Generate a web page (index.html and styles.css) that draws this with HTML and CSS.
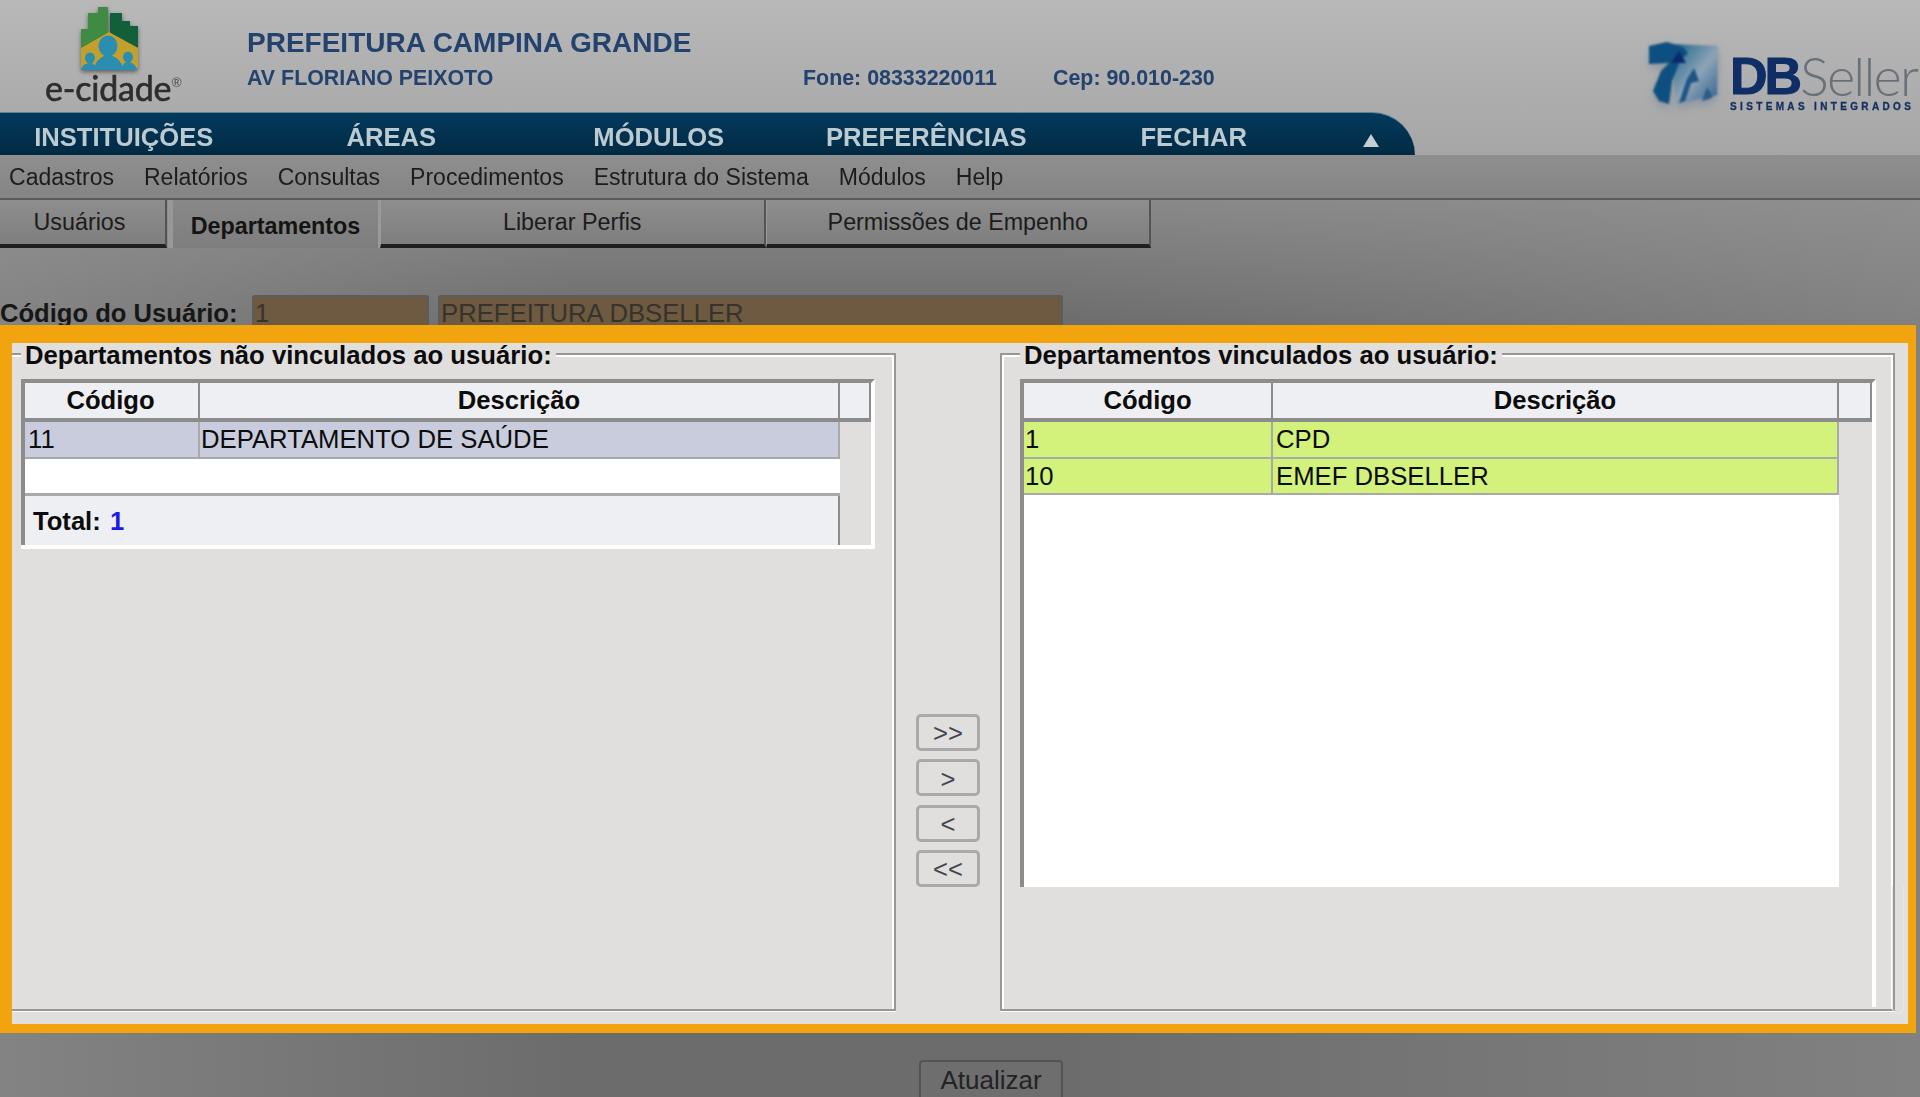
FILE: index.html
```html
<!DOCTYPE html>
<html lang="pt-BR">
<head>
<meta charset="utf-8">
<title>e-cidade</title>
<link rel="stylesheet" href="styles.css">
</head>
<body>
<div class="top">
  <header class="header">
    <div class="brand">
      <svg class="brand-icon" viewBox="0 0 60 66" width="60" height="66" aria-hidden="true">
        <path fill="#3f8b43" d="M1 23H8V7H18V1H28V27L1 42Z"/>
        <path fill="#11603a" d="M30 27V7H42V15H50V20H58V42Z"/>
        <path fill="#c2a02e" d="M1 42L29 26L58 42V62H1Z"/>
        <ellipse fill="#2b8eb0" cx="28" cy="40" rx="9.5" ry="10.5"/>
        <ellipse fill="#2b8eb0" cx="10" cy="52" rx="5" ry="5.5"/>
        <ellipse fill="#2b8eb0" cx="48" cy="51" rx="5" ry="5.5"/>
        <path fill="#2b8eb0" d="M14 64C15 54 22 50 28 49C35 50 42 54 43 64Z"/>
        <path fill="#2b8eb0" d="M1 64C2 59 6 57 10 57C13 57 16 59 17 64Z"/>
        <path fill="#2b8eb0" d="M41 64C42 59 44 56 48 56C52 56 56 59 57 64Z"/>
      </svg>
      <div class="brand-name">e-cidade<sup class="brand-reg">®</sup></div>
    </div>
    <div class="org">
      <div class="org-title">PREFEITURA CAMPINA GRANDE</div>
      <div class="org-line">AV FLORIANO PEIXOTO</div>
      <div class="org-line">Fone: 08333220011</div>
      <div class="org-line">Cep: 90.010-230</div>
    </div>
    <div class="dbseller">
      <svg class="db-icon" viewBox="0 0 72 72" width="72" height="72" aria-hidden="true">
        <defs>
          <linearGradient id="dbg" x1="0" y1="0" x2="1" y2="1">
            <stop offset="0" stop-color="#0e6088"/>
            <stop offset=".55" stop-color="#8ea3b6"/>
            <stop offset="1" stop-color="#2b5f8e"/>
          </linearGradient>
        </defs>
        <path fill="url(#dbg)" d="M22 3L71 5L70 54L30 63Z"/>
        <path fill="#0d4f80" d="M2 5L20 1L36 6L41 12L33 20L25 40L22 63L12 60L6 50L14 30L22 22L2 23Z"/>
        <path fill="#0b2868" d="M32 10L24 22L39 22Z"/>
        <path fill="#1c5484" d="M47 27L40 38L32 62L38 60L44 42L52 40Z"/>
        <path fill="#2a5b88" d="M60 46L55 60L62 58L66 56Z"/>
      </svg>
      <div class="db-text">
        <div class="db-word"><b class="db-bold">DB</b><span class="db-thin">Seller</span></div>
        <div class="db-sub">SISTEMAS INTEGRADOS</div>
      </div>
    </div>
  </header>
  <nav class="nav">
    <a class="nav-item nav-first">INSTITUIÇÕES</a>
    <a class="nav-item">ÁREAS</a>
    <a class="nav-item">MÓDULOS</a>
    <a class="nav-item">PREFERÊNCIAS</a>
    <a class="nav-item">FECHAR</a>
    <span class="nav-arrow"></span>
  </nav>
</div>
<div class="menu">
  <a>Cadastros</a><a>Relatórios</a><a>Consultas</a><a>Procedimentos</a><a>Estrutura do Sistema</a><a>Módulos</a><a>Help</a>
</div>
<main class="main">
  <div class="tabs">
    <div class="tab tab-users">Usuários</div>
    <div class="tab tab-active">Departamentos</div>
    <div class="tab tab-wide">Liberar Perfis</div>
    <div class="tab tab-wide">Permissões de Empenho</div>
  </div>
  <div class="user-row">
    <span class="user-label">Código do Usuário:</span>
    <div class="field field-code">1</div>
    <div class="field field-name">PREFEITURA DBSELLER</div>
  </div>
  <section class="panel">
    <fieldset class="group group-left">
      <legend class="group-title">Departamentos não vinculados ao usuário:</legend>
      <div class="list list-left">
        <div class="list-head cols-left">
          <div class="hcell hcell-code">Código</div>
          <div class="hcell">Descrição</div>
          <div class="hcell"></div>
        </div>
        <div class="list-rows rows-left">
          <div class="row cols-data-left row-sel">
            <div class="cell">11</div>
            <div class="cell cell-tight">DEPARTAMENTO DE SAÚDE</div>
          </div>
          <div class="row-empty"></div>
          <div class="total">Total: <span class="total-num">1</span></div>
        </div>
      </div>
    </fieldset>
    <div class="movers">
      <button class="mover">&gt;&gt;</button>
      <button class="mover">&gt;</button>
      <button class="mover">&lt;</button>
      <button class="mover">&lt;&lt;</button>
    </div>
    <fieldset class="group group-right">
      <legend class="group-title">Departamentos vinculados ao usuário:</legend>
      <div class="list list-right">
        <div class="list-head cols-right">
          <div class="hcell">Código</div>
          <div class="hcell">Descrição</div>
          <div class="hcell"></div>
        </div>
        <div class="list-rows rows-right">
          <div class="row cols-data-right row-on">
            <div class="cell cell-tight">1</div>
            <div class="cell">CPD</div>
          </div>
          <div class="row cols-data-right row-on">
            <div class="cell cell-tight">10</div>
            <div class="cell">EMEF DBSELLER</div>
          </div>
        </div>
      </div>
    </fieldset>
    <div class="scroll-track"></div>
  </section>
  <div class="footer">
    <button class="update">Atualizar</button>
  </div>
</main>
</body>
</html>
```

FILE: styles.css
```css
* { box-sizing: border-box; }
html, body { margin: 0; height: 1097px; overflow: hidden; }
body {
  font-family: "Liberation Sans", Arial, sans-serif;
  color: #1c1c1c;
  background: #808080;
  display: flex;
  flex-direction: column;
}

/* top band */
.top { background: linear-gradient(#b8b8b8, #a6a6a6); height: 155px; flex: none; }
.header { height: 112px; display: flex; align-items: flex-start; }
.brand { width: 247px; flex: none; display: flex; flex-direction: column; align-items: flex-start; padding: 6px 0 0 45px; }
.brand-icon { margin-left: 35px; filter: blur(.7px) drop-shadow(0 2px 2px rgba(40,40,40,.6)); display: block; }
.brand-name { font-family: Lato, "Liberation Sans", sans-serif; font-size: 34px; line-height: 30px; color: #2d2d2d; margin-top: 1px; filter: blur(.5px); letter-spacing: -.2px; -webkit-text-stroke: .6px #2d2d2d; white-space: nowrap; }
.brand-reg { font-size: 13px; line-height: 0; vertical-align: 14px; color: #555; -webkit-text-stroke: 0; }
.org { display: grid; grid-template-columns: 556px 250px 200px; padding-top: 28px; color: #24426e; font-weight: bold; filter: blur(.35px); }
.org-title { grid-column: 1 / -1; font-size: 28px; line-height: 30px; height: 37px; }
.org-line { font-size: 21.4px; line-height: 26px; }
.dbseller { margin-left: auto; display: flex; align-items: flex-start; padding-top: 41px; width: 273px; }
.db-icon { flex: none; margin-right: 11px; filter: blur(.8px) drop-shadow(0 5px 4px rgba(110,130,150,.5)); }
.db-text { width: 190px; filter: blur(.5px); margin-top: 10px; }
.db-word { display: flex; line-height: 50px; height: 50px; font-size: 52px; white-space: nowrap; }
.db-bold { color: #0f2e66; letter-spacing: -3px; -webkit-text-stroke: 1px #0f2e66; }
.db-thin { font-family: Lato, "Open Sans", sans-serif; font-weight: 300; font-size: 54px; color: #6a7078; letter-spacing: -1.8px; margin-left: 1px; }
.db-sub { font-size: 10px; font-weight: bold; line-height: 10px; letter-spacing: 3.35px; color: #12305f; white-space: nowrap; margin-top: 1px; -webkit-text-stroke: .3px #12305f; }

.nav {
  width: 1415px; height: 43px;
  display: grid; grid-template-columns: 257.5px repeat(4, 267.5px) 1fr;
  align-items: center;
  background: linear-gradient(#033a5c, #012a43);
  border-top: 1px solid #5f8294;
  border-radius: 0 48px 0 0;
}
.nav-item { text-align: center; font-size: 25.6px; font-weight: bold; color: #bccad2; padding-top: 7px; filter: blur(.35px); }
.nav-first { padding-right: 10px; }
.nav-arrow { justify-self: end; margin: 12px 36px 0 0; width: 0; height: 0; border-left: 8px solid transparent; border-right: 8px solid transparent; border-bottom: 13px solid #c3ced4; }

/* menu */
.menu {
  flex: none; height: 45px; padding: 2px 0 0 9px;
  display: flex; align-items: center; gap: 30px;
  background: linear-gradient(#8f8f8f, #848484);
  border-bottom: 2px solid #5c5c5c;
  font-size: 23.04px; color: #1c1c1c;
  white-space: nowrap;
}
.menu a { filter: blur(.35px); }

/* main */
.main { flex: 1; display: flex; flex-direction: column; min-height: 0; position: relative;
  background:
    linear-gradient(to right, rgba(150,150,150,.55), rgba(150,150,150,0) 30%, rgba(150,150,150,0) 55%, rgba(150,150,150,.5)),
    linear-gradient(#888 0, #6c6c6c 125px, #6c6c6c 100%);
}
.tabs { display: flex; height: 48px; flex: none; align-items: stretch; font-size: 23.3px; }
.tab { text-align: center; padding-top: 8px; line-height: 28px; background: linear-gradient(#8e8e8e, #7e7e7e); border-right: 2px solid #545454; border-bottom: 4px solid #1f1f1f; color: #1c1c1c; }
.tab-users { width: 167px; padding-right: 6px; }
.tab-active { width: 212px; margin-left: 1px; padding-top: 12px; font-weight: bold; border-bottom: 0; border-left: 5px solid #989898; border-right: 2px solid #9a9a9a; background: linear-gradient(#888, #7e7e7e); color: #141414; }
.tab-wide { width: 385.5px; border-left: 1px solid #9a9a9a; }

.user-row { flex: none; height: 77px; padding-top: 47px; overflow: hidden; display: flex; align-items: flex-start; font-size: 25.6px; }
.user-label { width: 252px; font-weight: bold; color: #171717; line-height: 36px; white-space: nowrap; }
.field { height: 40px; background: #6d5a40; border: 2px solid #5c5c5c; border-radius: 3px; line-height: 32px; padding-left: 1px; color: #37332c; font-size: 25.7px; }
.field-code { width: 177px; margin-right: 9px; }
.field-name { width: 625px; }

/* panel */
.panel {
  flex: none; width: 1916px; height: 708px;
  position: relative;
  display: flex;
  background: #e0dfdd;
  border: solid #f1a40e;
  border-width: 18px 8px 9px 12px;
  color: #0c0c0c;
}
.group { margin: -1px 0 13px; padding: 0; border: 2px solid #979797; min-width: 0; }
.group-left { width: 884px; flex: none; border-left: 0; box-shadow: inset 0 2px 0 #fff, inset -2px 0 0 #fff, 0 1px 0 #fff; }
.group-right { width: 895px; flex: none; box-shadow: inset 0 2px 0 #fff, inset -2px 0 0 #fff, inset 2px 0 0 #fff, 0 1px 0 #fff; }
.group-title { font-size: 25.7px; font-weight: bold; line-height: 22px; padding: 2px 4px 0; margin-left: 9px; white-space: nowrap; background: linear-gradient(transparent 1px, #e0dfdd 1px); }
.group-right .group-title { margin-left: 18px; }
.movers { width: 104px; flex: none; display: flex; flex-direction: column; align-items: center; justify-content: flex-end; gap: 8.33px; padding-bottom: 137px; }
.mover { width: 64px; height: 37px; background: #e0dfdd; border: 3px solid #a9a9a9; border-radius: 5px; font: 25.6px/1 "Liberation Sans", sans-serif; color: #43464e; padding: 3px 0 0; }
.scroll-track { position: absolute; right: 4px; top: 543px; bottom: 10px; width: 12px; border: 1px solid #e9e8e6; border-top: 0; border-radius: 0 0 8px 8px; }

.list { border-top: 4px solid #8c8c8c; border-right: 4px solid #fff; background: #e0dfdd; }
.list-left { margin: 13px 0 0 9px; width: 854px; border-bottom: 4px solid #fff; }
.list-right { margin: 13px 0 0 18px; width: 856px; height: 628px; }
.list-head { height: 39px; display: grid; border-left: 4px solid #8c8c8c; border-bottom: 4px solid #8c8c8c; }
.cols-left { grid-template-columns: 175px 640px 31px; }
.cols-right { grid-template-columns: 249px 566px 33px; }
.hcell { background: #eeeff3; border-right: 2px solid #8c8c8c; font-size: 25.6px; font-weight: bold; text-align: center; line-height: 35px; }
.hcell-code { padding-right: 2px; }
.list-rows { border-left: 4px solid #8c8c8c; }
.rows-left { width: 819px; }
.rows-right { width: 819px; height: 465px; background: #fff; }
.row { display: grid; height: 36.5px; }
.cols-data-left { grid-template-columns: 175px 640px; }
.cols-data-right { grid-template-columns: 249px 566px; }
.row-sel { background: #c9ccdd; width: 815px; }
.row-on { background: #d2f27b; width: 815px; }
.cell { font-size: 25.7px; line-height: 34px; padding-left: 3px; border-right: 2px solid #a9a9a9; border-bottom: 2px solid #a9a9a9; white-space: nowrap; }
.cell-tight { padding-left: 1px; }
.row-empty { height: 37px; width: 815px; background: #fff; border-bottom: 3px solid #a9a9a9; }
.total { height: 49px; width: 815px; background: #eeeff3; border-right: 2px solid #8c8c8c; padding-left: 8px; font-size: 25.6px; font-weight: bold; line-height: 50px; }
.total-num { color: #1a1ae6; margin-left: 2px; }

/* footer */
.footer { flex: 1; display: flex; padding: 27px 0 0 919px; min-height: 0; }
.update { width: 144px; height: 44px; flex: none; background: #6e6e6e; border: 2px solid #545454; border-radius: 4px; font: 26px/1 "Liberation Sans", sans-serif; color: #232323; padding: 0 0 4px; }
```
